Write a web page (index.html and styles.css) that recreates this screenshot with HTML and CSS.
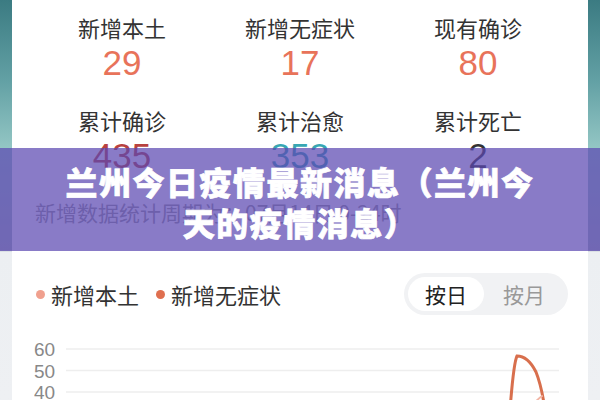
FILE: index.html
```html
<!DOCTYPE html>
<html lang="zh-CN">
<head>
  <meta charset="UTF-8">
  <meta name="viewport" content="width=device-width, initial-scale=1.0">
  <title>兰州今日疫情最新消息</title>
  <link rel="stylesheet" href="styles.css">
</head>
<body>
  <div class="card">
    <div class="stats">
      <div class="stat">
        <div class="label">新增本土</div>
        <div class="num red">29</div>
      </div>
      <div class="stat">
        <div class="label">新增无症状</div>
        <div class="num red">17</div>
      </div>
      <div class="stat">
        <div class="label">现有确诊</div>
        <div class="num red">80</div>
      </div>
      <div class="stat">
        <div class="label">累计确诊</div>
        <div class="num crimson">435</div>
      </div>
      <div class="stat">
        <div class="label">累计治愈</div>
        <div class="num teal">353</div>
      </div>
      <div class="stat">
        <div class="label">累计死亡</div>
        <div class="num dark">2</div>
      </div>
    </div>
    <div class="note">新增数据统计周期为：07月14日 0-24时</div>

    <div class="chart-head">
      <div class="legend">
        <span class="dot local"></span>新增本土
        <span class="dot asym"></span>新增无症状
      </div>
      <div class="toggle">
        <span class="on">按日</span>
        <span>按月</span>
      </div>
    </div>

    <svg class="chart" width="533" height="70" viewBox="0 0 533 70">
      <g class="grid">
        <line x1="32" y1="11" x2="525" y2="11"/>
        <line x1="32" y1="32.5" x2="525" y2="32.5"/>
        <line x1="32" y1="54" x2="525" y2="54"/>
      </g>
      <g class="axis">
        <text x="0" y="18">60</text>
        <text x="0" y="39.5">50</text>
        <text x="0" y="61">40</text>
      </g>
      <path class="line asym-line" d="M476 72 C478 46 480 24 483 18 C490 18 497 24 502 34 C506 44 509 58 511 72"/>
      <path class="line local-line" d="M497 70 C501 64 505 60 508 58"/>
    </svg>
  </div>

  <div class="banner">
    <h1>兰州今日疫情最新消息（兰州今天的疫情消息）</h1>
  </div>
</body>
</html>
```

FILE: styles.css
```css
body {
  margin: 0;
  height: 400px;
  overflow: hidden;
  font-family: "Noto Sans CJK SC", "Noto Sans", sans-serif;
  background: linear-gradient(180deg, #3b7b82 0, #62a0a4 80px, #93c6c4 148px, #a9b8bc 250px, #eceff2 252px, #eef0f3 100%);
  position: relative;
}
.card {
  margin: 0 12px;
  height: 400px;
  background: #fff;
  padding: 12px 20px 0 23px;
  box-sizing: border-box;
}
.stats {
  display: grid;
  grid-template-columns: repeat(3, 178px);
  justify-content: center;
  row-gap: 22px;
  margin-left: -3px;
}
.stat {
  text-align: center;
}
.label {
  font-size: 22px;
  line-height: 30px;
  color: #333;
}
.num {
  margin-top: 1px;
  font-family: "Liberation Sans", Arial, sans-serif;
  font-size: 35px;
  line-height: 40px;
}
.red { color: #e8735a; }
.crimson { color: #b8423f; }
.teal { color: #38a7b3; }
.dark { color: #333; }
.note {
  margin-top: 22px;
  font-size: 21px;
  line-height: 28px;
  color: #999;
}
.chart-head {
  margin-top: 47px;
  display: flex;
  align-items: center;
  justify-content: space-between;
}
.legend {
  display: flex;
  align-items: center;
  font-size: 22px;
  color: #333;
}
.dot {
  width: 9px;
  height: 9px;
  border-radius: 50%;
  margin: 0 6px 0 1px;
}
.dot.local { background: #f0a08e; }
.dot.asym { background: #df6f4f; margin-left: 17px; }
.toggle {
  display: flex;
  align-items: center;
  background: #f1f2f4;
  border-radius: 21px;
  height: 42px;
  padding: 0 4px;
  font-size: 21px;
  color: #999;
}
.toggle span {
  width: 76px;
  text-align: center;
  line-height: 34px;
}
.toggle span + span {
  width: 80px;
}
.toggle .on {
  background: #fff;
  border-radius: 17px;
  color: #222;
}
.chart {
  display: block;
  margin-top: 23px;
  margin-left: -1px;
}
.grid line {
  stroke: #eeeeee;
  stroke-width: 1.5;
}
.axis text {
  font-family: "Liberation Sans", Arial, sans-serif;
  font-size: 19px;
  fill: #888;
}
.line {
  fill: none;
  stroke-width: 3;
  stroke-linecap: round;
}
.asym-line { stroke: #d86f4d; }
.local-line { stroke: #f2b6a6; stroke-width: 2; }
.banner {
  position: absolute;
  top: 148px;
  left: 0;
  right: 0;
  height: 103px;
  background: rgba(92, 72, 178, 0.72);
  display: flex;
  align-items: center;
  justify-content: center;
}
.banner h1 {
  margin: 4px 0 0;
  max-width: 486px;
  text-align: center;
  font-size: 32px;
  line-height: 41px;
  letter-spacing: 1.5px;
  font-weight: 900;
  color: #fff;
  -webkit-text-stroke: 0.7px #fff;
}
```
